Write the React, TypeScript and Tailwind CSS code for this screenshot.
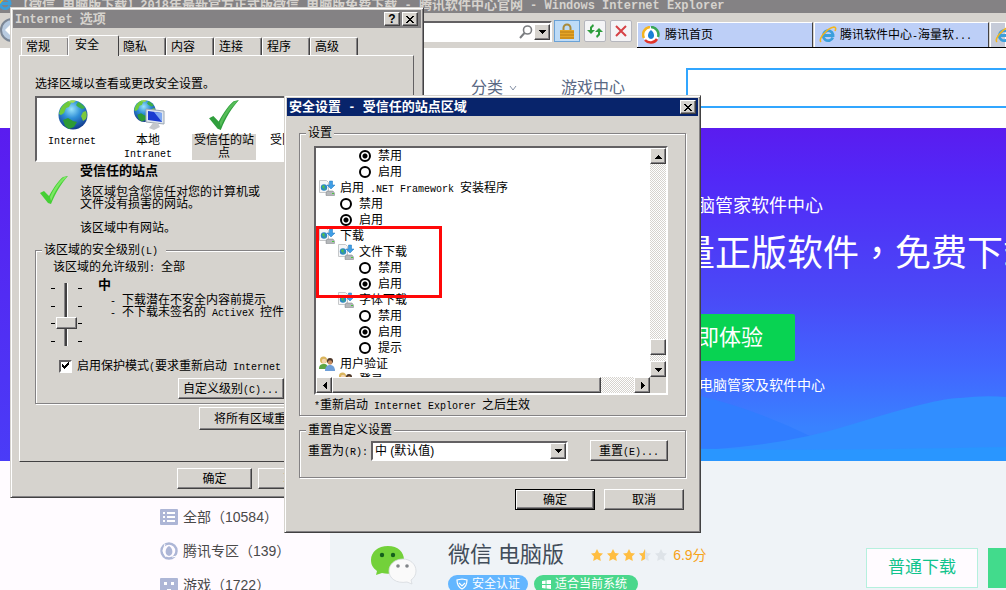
import React, { useState } from 'react';
import clsx from 'clsx';

const RAISED = 'border border-t-white border-l-white border-r-[#424142] border-b-[#424142] bg-[#d6d3ce] shadow-[inset_-1px_-1px_#848284]';
const SUNKEN = 'border-2 border-t-[#636163] border-l-[#636163] border-r-white border-b-white bg-white';
const WINDOW = 'border border-t-[#d6d3ce] border-l-[#d6d3ce] border-r-[#424142] border-b-[#424142] bg-[#d6d3ce] p-[2px] shadow-[inset_1px_1px_#fff,inset_-1px_-1px_#848284]';
const GROUP = 'min-w-0 border border-[#848284] shadow-[1px_1px_#fff,inset_1px_1px_#fff]';
const DITHER = 'bg-[repeating-conic-gradient(#fff_0_25%,#d6d3ce_0_50%)] bg-[length:2px_2px]';

// Latin runs are set in a half-width face so they line up with the CJK grid
function Mix({ text, bold = false }: { text: string; bold?: boolean }) {
	return (
		<span className={clsx('whitespace-pre', bold && 'font-bold')}>
			{text.split(/([\x20-\x7e]+)/).map((part, i) =>
				i % 2 === 1
					? <span key={i} className={clsx("font-['Liberation_Mono',monospace] leading-none", bold ? 'text-[12px]' : 'text-[10px]')}>{part}</span>
					: part
			)}
		</span>
	);
}

function Button({ label, className, isDefault = false }: { label: string; className?: string; isDefault?: boolean }) {
	return (
		<button
			className={clsx(
				'shrink-0 flex items-center justify-center text-[12px] leading-4',
				isDefault
					? 'border border-black bg-[#d6d3ce] shadow-[inset_1px_1px_#fff,inset_-1px_-1px_#424142,inset_-2px_-2px_#848284]'
					: RAISED,
				className
			)}
		>
			<Mix text={label} />
		</button>
	);
}

function CaptionButton({ label, children }: { label: string; children: React.ReactNode }) {
	return (
		<button aria-label={label} className={clsx('w-4 h-[14px] flex items-center justify-center', RAISED)}>
			{children}
		</button>
	);
}

function CloseGlyph() {
	return (
		<svg width="8" height="7" viewBox="0 0 8 7" shapeRendering="crispEdges">
			<path d="M0 0h2v1H0zM6 0h2v1H6zM1 1h2v1H1zM5 1h2v1H5zM2 2h4v1H2zM3 3h2v1H3zM2 4h4v1H2zM1 5h2v1H1zM5 5h2v1H5zM0 6h2v1H0zM6 6h2v1H6z" />
		</svg>
	);
}

function ArrowButton({ dir }: { dir: 'up' | 'down' | 'left' | 'right' }) {
	const paths = { up: 'M3 0h1v1h1v1h1v1h1v1H0V3h1V2h1V1h1z', down: 'M0 0h7v1H6v1H5v1H4v1H3V3H2V2H1V1H0z', left: 'M3 0h1v7H3V6H2V5H1V4H0V3h1V2h1V1h1z', right: 'M0 0h1v1h1v1h1v1h1v1H3v1H2v1H1v1H0z' };
	return (
		<button aria-label={`Scroll ${dir}`} className={clsx('w-4 h-4 shrink-0 flex items-center justify-center', RAISED)}>
			<svg width="7" height="7" viewBox={dir === 'up' || dir === 'down' ? '0 -2 7 7' : '-2 0 7 7'} shapeRendering="crispEdges">
				<path d={paths[dir]} />
			</svg>
		</button>
	);
}

function Globe({ className }: { className?: string }) {
	return (
		<svg viewBox="0 0 32 32" className={className}>
			<defs>
				<radialGradient id="sea" cx="0.45" cy="0.3" r="0.7">
					<stop offset="0" stopColor="#9be4fb" />
					<stop offset="0.45" stopColor="#2f8fd8" />
					<stop offset="1" stopColor="#123a8c" />
				</radialGradient>
			</defs>
			<circle cx="17" cy="16" r="14.500" fill="url(#sea)" />
			<path d="M4 11c2-5 6-8 9-9l2 2-2 4-3 1-2 5-3 2-2-1z" fill="#6fca3c" />
			<path d="M12 3c2-2 6-2 8-1l-3 2z" fill="#a5dc55" />
			<path d="M22 3c3 1 6 4 7 6l-3 1-4-2-2-2z" fill="#3fae46" />
			<path d="M27 13l3-1c1 3 1 6 0 8l-3 2-2-5z" fill="#7cc93c" />
			<path d="M7 21l5-2 5 3 4 1-3 5-5 2-4-3z" fill="#2d9a35" />
		</svg>
	);
}

function CheckMark({ light = false }: { light?: boolean }) {
	return (
		<svg viewBox="0 0 30 28" className={light ? 'w-[30px] h-7' : 'w-8 h-8'}>
			<path d="M1 17l4-2 5 5C15 11 20 4 24 1l5-1C22 8 17 16 12 28l-3-1z" fill={light ? '#45cf35' : '#2f9e3d'} />
			<path d="M11 21C15 12 20 5 25 1l3 0C20 8 15 17 12 25z" fill={light ? '#7ce863' : '#56bd58'} />
		</svg>
	);
}

function IntranetIcon() {
	return (
		<div className="relative w-8 h-8">
			<Globe className="w-6 h-6" />
			<svg viewBox="0 0 20 22" className="absolute left-[13px] top-[9px] w-5 h-[22px]">
				<path d="M1 1l18 2v13L1 14z" fill="#dfe6ee" stroke="#9aa6b4" />
				<path d="M3 3l14 2v9L3 12z" fill="#1a3bd0" />
				<path d="M9 4l8 1v9z" fill="#7fa8f2" />
				<path d="M8 15h5l2 4-6 3-5-2z" fill="#c4c7cc" />
			</svg>
		</div>
	);
}

function DownloadIcon() {
	return (
		<svg viewBox="0 0 16 16" className="w-4 h-4">
			<path d="M.5.5h7l2 2v10h-9z" fill="#f5f6f7" stroke="#c6c8ca" />
			<circle cx="5" cy="7.500" r="3.200" fill="#2a86c8" />
			<path d="M3 6l2-1 1 2-2 2zM5 9l2-1-1 2z" fill="#4fc04a" />
			<path d="M10.500 1h3v4H16l-4 4-4-4h2.500z" fill="#3f9ee6" stroke="#1d74bd" strokeWidth=".5" />
			<path d="M7 13l1-2h6l1.500 2v2.500H7z" fill="#b4b7ba" stroke="#7b7e82" strokeWidth=".5" />
			<path d="M13 13h2v1h-2z" fill="#49c93e" />
		</svg>
	);
}

function UsersIcon() {
	return (
		<svg viewBox="0 0 16 16" className="w-4 h-4">
			<circle cx="4.500" cy="4" r="3.500" fill="#d9b45c" />
			<circle cx="5" cy="5" r="2.200" fill="#f4d3ae" />
			<path d="M0 13c0-4 2-5 5-5s4 2 4 5z" fill="#5da544" />
			<circle cx="11" cy="5" r="3" fill="#4b3527" />
			<circle cx="11" cy="6.500" r="2.200" fill="#c98f62" />
			<path d="M6 15c0-4 2-6 5-6s5 2 5 6z" fill="#6e9fd8" />
		</svg>
	);
}

function IeIcon() {
	return (
		<svg viewBox="0 0 18 18" className="w-[18px] h-[18px] shrink-0">
			<path d="M13.800 11.500A5 5 0 1 1 14 8.500v1H5" fill="none" stroke="#3b9fdb" strokeWidth="2.800" />
			<path d="M2 16C-1 13 8 2 15 1c2 0 2 2 1 4" fill="none" stroke="#f2b51d" strokeWidth="1.600" />
		</svg>
	);
}

function TencentIcon() {
	return (
		<svg viewBox="0 0 18 18" className="w-[18px] h-[18px] shrink-0">
			<circle cx="9" cy="9" r="8" fill="#fff" />
			<path d="M2 12A7.500 7.500 0 0 1 8 1" fill="none" stroke="#f4b41f" strokeWidth="2.500" />
			<path d="M9 1a7.500 7.500 0 0 1 7 10" fill="none" stroke="#3aa757" strokeWidth="2.500" />
			<path d="M15 13A7.500 7.500 0 0 1 3 14" fill="none" stroke="#e0352b" strokeWidth="2.500" />
			<path d="M9 4c3 2 5 8 0 9-5-1-3-7 0-9z" fill="#1b7fd6" />
		</svg>
	);
}

const TABS = ['常规', '安全', '隐私', '内容', '连接', '程序', '高级'];

const ZONES = [
	{ name: 'Internet', icon: <Globe className="w-8 h-8" /> },
	{ name: '本地\nIntranet', icon: <IntranetIcon /> },
	{ name: '受信任的站\n点', icon: <CheckMark /> },
	{ name: '受限制的站\n点', icon: <svg viewBox="0 0 32 32" className="w-8 h-8"><circle cx="16" cy="16" r="12" fill="none" stroke="#c92b2b" strokeWidth="5" /><path d="M8 8l16 16" stroke="#c92b2b" strokeWidth="5" /></svg> },
];

function Ticks() {
	return (
		<div className="flex flex-col justify-between w-1 h-[54px] mt-[5px]">
			{[0, 1, 2, 3].map(i => <div key={i} className="h-px bg-black" />)}
		</div>
	);
}

function InternetOptions() {
	const [tab, setTab] = useState('安全');
	const [zone, setZone] = useState(2);

	return (
		<section className={clsx('absolute left-[10px] top-[7px] w-[414px] whitespace-nowrap', WINDOW)}>
			<header className="h-[18px] flex items-center gap-[2px] bg-[#848284] pl-[2px] pr-[3px] text-[13px] text-[#d6d3ce]">
				<h1 className="flex-1 leading-4"><Mix text="Internet 选项" bold /></h1>
				<CaptionButton label="Help"><b className="text-[12px] leading-3 text-black">?</b></CaptionButton>
				<CaptionButton label="Close"><CloseGlyph /></CaptionButton>
			</header>
			<div className="pt-[7px] pl-1.5 pr-[7px] pb-1.5">
				<div role="tablist" className="flex items-end h-5 pl-[2px]">
					{TABS.map(t => (
						<button
							key={t}
							role="tab"
							aria-selected={t === tab}
							onClick={() => setTab(t)}
							className={clsx(
								'border border-b-0 border-t-white border-l-white border-r-[#424142] bg-[#d6d3ce] rounded-t-[2px] text-left leading-4',
								t === tab ? 'relative z-10 w-[51px] h-[21px] -mx-px -mb-px px-1.5 pb-[2px]' : 'w-12 h-[18px] px-1 shadow-[inset_-1px_0_#848284]'
							)}
						>
							{t}
						</button>
					))}
				</div>
				<div className="border border-t-white border-l-white border-r-[#636163] border-b-[#424142] px-[15px] pt-5 pb-[31px]">
					<p className="leading-4">选择区域以查看或更改安全设置。</p>
					<div className={clsx('mt-1 flex gap-3 pl-[3px] pt-px overflow-hidden', SUNKEN)}>
						{ZONES.map((z, i) => (
							<button key={z.name} onClick={() => setZone(i)} className="w-16 shrink-0 flex flex-col items-center gap-[3px]">
								{z.icon}
								<span className={clsx('w-16 h-[26px] leading-[13px] text-center', i === zone && 'bg-[#d6d3ce]')}>
									<Mix text={z.name} />
								</span>
							</button>
						))}
					</div>
					<div className="flex gap-[11px] pl-1 pt-px">
						<div className="pt-[13px]"><CheckMark light /></div>
						<div>
							<h2 className="text-[13px] font-bold leading-4">受信任的站点</h2>
							<p className="mt-[7px] leading-3">该区域包含您信任对您的计算机或<br />文件没有损害的网站。</p>
							<p className="mt-3 leading-3">该区域中有网站。</p>
						</div>
					</div>
					<fieldset className={clsx('mt-2 pb-1', GROUP)}>
						<legend className="ml-1.5 pl-[2px] pr-2 bg-[#d6d3ce] leading-4"><Mix text="该区域的安全级别(L)" /></legend>
						<p className="mt-px pl-[17px] leading-4"><Mix text="该区域的允许级别: 全部" /></p>
						<div className="flex pl-[15px]">
							<div className="flex gap-px mt-2 h-[63px]">
								<Ticks />
								<input
									type="range"
									aria-label="安全级别"
									min={0}
									max={3}
									defaultValue={2}
									className="appearance-none [writing-mode:vertical-lr] w-[21px] h-[63px] bg-[linear-gradient(90deg,transparent_8px,#848284_8px_9px,#424142_9px_11px,#fff_11px_12px,transparent_12px)] [&::-webkit-slider-thumb]:appearance-none [&::-webkit-slider-thumb]:w-[21px] [&::-webkit-slider-thumb]:h-3 [&::-webkit-slider-thumb]:bg-[#d6d3ce] [&::-webkit-slider-thumb]:border [&::-webkit-slider-thumb]:border-t-white [&::-webkit-slider-thumb]:border-l-white [&::-webkit-slider-thumb]:border-r-[#424142] [&::-webkit-slider-thumb]:border-b-[#424142] [&::-webkit-slider-thumb]:shadow-[inset_-1px_-1px_#848284]"
								/>
								<Ticks />
							</div>
							<div className="ml-4 pt-[2px]">
								<h3 className="text-[13px] font-bold leading-4">中</h3>
								<ul className="mt-px pl-3 leading-3">
									<li className="h-3"><Mix text="- 下载潜在不安全内容前提示" /></li>
									<li className="h-3"><Mix text="- 不下载未签名的 ActiveX 控件" /></li>
								</ul>
							</div>
						</div>
						<label className="relative mt-3 pl-[23px] flex items-center gap-[5px] leading-4">
							<input type="checkbox" defaultChecked className={clsx('peer appearance-none w-[13px] h-[13px] shrink-0', SUNKEN)} />
							<svg viewBox="0 0 7 7" className="absolute left-[26px] top-[4px] w-[7px] h-[7px] invisible peer-checked:visible" shapeRendering="crispEdges">
								<path d="M0 2h1v1h1v1h1V3h1V2h1V1h1V0h1v3H6v1H5v1H4v1H3v1H2V6H1V5H0z" />
							</svg>
							<Mix text="启用保护模式(要求重新启动 Internet Explorer)(P)" />
						</label>
						<Button label="自定义级别(C)..." className="mt-1 ml-[142px] w-[106px] h-[21px]" />
					</fieldset>
					<Button label="将所有区域重置为默认级别(R)" className="mt-[3px] ml-[164px] w-48 h-[23px]" />
				</div>
				<div className="mt-1.5 flex justify-end gap-1.5">
					<Button label="确定" className="w-[75px] h-[21px]" />
					<Button label="取消" className="w-[75px] h-[21px]" />
					<Button label="应用(A)" className="w-[75px] h-[21px]" />
				</div>
			</div>
		</section>
	);
}

type Row = { level: 0 | 1 | 2; text: string; kind: 'download' | 'users' | 'radio'; group?: string; on?: boolean };

const ROWS: Row[] = [
	{ level: 2, text: '禁用', kind: 'radio', group: 'first', on: true },
	{ level: 2, text: '启用', kind: 'radio', group: 'first' },
	{ level: 0, text: '启用 .NET Framework 安装程序', kind: 'download' },
	{ level: 1, text: '禁用', kind: 'radio', group: 'net' },
	{ level: 1, text: '启用', kind: 'radio', group: 'net', on: true },
	{ level: 0, text: '下载', kind: 'download' },
	{ level: 1, text: '文件下载', kind: 'download' },
	{ level: 2, text: '禁用', kind: 'radio', group: 'file' },
	{ level: 2, text: '启用', kind: 'radio', group: 'file', on: true },
	{ level: 1, text: '字体下载', kind: 'download' },
	{ level: 2, text: '禁用', kind: 'radio', group: 'font' },
	{ level: 2, text: '启用', kind: 'radio', group: 'font', on: true },
	{ level: 2, text: '提示', kind: 'radio', group: 'font' },
	{ level: 0, text: '用户验证', kind: 'users' },
	{ level: 1, text: '登录', kind: 'users' },
];

const INDENT = ['pl-[3px]', 'pl-[22px]', 'pl-[41px]'];

function SettingRow({ row }: { row: Row }) {
	const Tag = row.kind === 'radio' ? 'label' : 'div';
	return (
		<Tag className={clsx('h-4 flex items-center gap-[5px] leading-4', INDENT[row.level])}>
			<span className="w-4 h-4 flex items-center justify-center">
				{row.kind === 'download' && <DownloadIcon />}
				{row.kind === 'users' && <UsersIcon />}
				{row.kind === 'radio' && (
					<input
						type="radio"
						name={row.group}
						defaultChecked={row.on}
						className="appearance-none w-3 h-3 rounded-full border-2 border-black bg-white checked:bg-[radial-gradient(circle,#000_0_2px,#fff_3px)]"
					/>
				)}
			</span>
			<Mix text={row.text} />
		</Tag>
	);
}

function SecuritySettings() {
	return (
		<section className={clsx('absolute left-[284px] top-[95px] w-[417px] whitespace-nowrap', WINDOW)}>
			<header className="h-[18px] flex items-center bg-[#08246b] pl-[2px] pr-[2px] text-[13px] text-white">
				<h1 className="flex-1 leading-4"><Mix text="安全设置 - 受信任的站点区域" bold /></h1>
				<CaptionButton label="Close"><CloseGlyph /></CaptionButton>
			</header>
			<div className="px-3 pt-[9px] pb-5">
				<fieldset className={clsx('pl-[14px] pr-[17px] pb-[2px]', GROUP)}>
					<legend className="-ml-2 px-[2px] bg-[#d6d3ce] leading-4">设置</legend>
					<div className={clsx('mt-[5px]', SUNKEN)}>
						<div className="flex">
							<div className="relative flex-1 h-[229px] overflow-hidden">
								{ROWS.map((row, i) => <SettingRow key={i} row={row} />)}
								<div className="absolute left-0 top-[78px] w-[126px] h-[72px] border-3 border-[#ff0808]" />
							</div>
							<div className={clsx('w-4 flex flex-col', DITHER)}>
								<ArrowButton dir="up" />
								<div className={clsx('mt-auto mb-1.5 h-4', RAISED)} />
								<ArrowButton dir="down" />
							</div>
						</div>
						<div className="flex bg-[#d6d3ce] pr-4">
							<ArrowButton dir="left" />
							<div className={clsx('flex-1 flex', DITHER)}>
								<div className={clsx('w-[89%]', RAISED)} />
							</div>
							<ArrowButton dir="right" />
						</div>
					</div>
					<p className="mt-[2px] h-4 leading-4"><Mix text="*重新启动 Internet Explorer 之后生效" /></p>
				</fieldset>
				<fieldset className={clsx('mt-1.5 pl-2 pr-[17px] pb-4', GROUP)}>
					<legend className="-ml-[2px] px-[2px] bg-[#d6d3ce] leading-4">重置自定义设置</legend>
					<div className="mt-[2px] flex items-center">
						<label htmlFor="reset-to" className="leading-4"><Mix text="重置为(R):" /></label>
						<div className={clsx('ml-[3px] w-[197px] h-5 flex', SUNKEN)}>
							<select id="reset-to" className="appearance-none flex-1 pl-[2px] text-[12px] leading-4 bg-white outline-none">
								<option>中 (默认值)</option>
								<option>中低</option>
								<option>高</option>
							</select>
							<ArrowButton dir="down" />
						</div>
						<Button label="重置(E)..." className="ml-auto w-[78px] h-[21px]" />
					</div>
				</fieldset>
				<div className="mt-[11px] pr-[2px] flex justify-end gap-[9px]">
					<Button label="确定" className="w-20 h-[21px]" isDefault />
					<Button label="取消" className="w-20 h-[21px]" />
				</div>
			</div>
		</section>
	);
}

function BrowserChrome() {
	return (
		<header className="whitespace-nowrap">
			<div className="relative h-[13px] overflow-hidden bg-[#848284] pl-4 text-[13px] leading-[10px] text-[#d6d3ce]">
				<div className="absolute -left-1 -top-1.5"><IeIcon /></div>
				<Mix text="【微信 电脑版下载】2018年最新官方正式版微信 电脑版免费下载 - 腾讯软件中心官网 - Windows Internet Explorer" bold />
			</div>
			<div className="flex h-[35px] bg-[#d6d3ce] overflow-hidden">
				<svg viewBox="0 0 24 28" className="w-6 h-7 mt-[3px] shrink-0">
					<circle cx="12" cy="14" r="11" fill="#b9cbe0" stroke="#7c8796" strokeWidth="2" />
					<path d="M13 6l-8 8 8 8v-5h7v-6h-7z" fill="#fff" />
				</svg>
				<div className={clsx('mt-2 w-[528px] h-[21px] shrink-0 flex items-center justify-end gap-px', SUNKEN)}>
					<input aria-label="Address" className="flex-1 min-w-0 outline-none" />
					<svg viewBox="0 0 14 14" className="w-[14px] h-[14px]">
						<circle cx="8.500" cy="5" r="4" fill="none" stroke="#7b7d80" strokeWidth="1.600" />
						<path d="M5.500 8L1 13" stroke="#7b7d80" strokeWidth="2" />
					</svg>
					<ArrowButton dir="down" />
				</div>
				<button aria-label="Security report" className="mt-[7px] ml-[2px] w-[26px] h-[22px] shrink-0 flex items-center justify-center border border-[#6ba2d6] bg-[#bddbf7]">
					<svg viewBox="0 0 14 16" className="w-[14px] h-4">
						<path d="M3.500 8V5a3.500 3.500 0 0 1 7 0v3" fill="none" stroke="#a98a3a" strokeWidth="2" />
						<path d="M0 7h14v9H0z" fill="#e5a526" />
						<path d="M0 9h14M0 12h14M0 15h14" stroke="#b87a12" />
					</svg>
				</button>
				<button aria-label="Refresh" className="mt-[7px] ml-1 w-[22px] h-[22px] shrink-0 flex items-center justify-center rounded-[2px] border border-[#b5b6bd] bg-[#f4f4f6]">
					<svg viewBox="0 0 16 14" className="w-4 h-[14px]">
						<path d="M6 0L3 3v3H0l4 4 4-4H5V4l2-2z" fill="#2e9e3e" />
						<path d="M10 14l3-3V8h3l-4-4-4 4h3v2l-2 2z" fill="#2e9e3e" />
					</svg>
				</button>
				<button aria-label="Stop" className="mt-[7px] ml-1 w-[22px] h-[22px] shrink-0 flex items-center justify-center rounded-[2px] border border-[#b5b6bd] bg-[#f4f4f6]">
					<svg viewBox="0 0 12 12" className="w-3 h-3"><path d="M1 1l10 10M11 1L1 11" stroke="#d64247" strokeWidth="2" /></svg>
				</button>
				<nav className="mt-[9px] ml-[5px] flex flex-1 min-w-0 border-b border-black">
					<a href="#home" className="w-[176px] shrink-0 flex items-center gap-[5px] pl-1 border border-b-0 border-t-white border-l-white border-r-[#424142] bg-[#bdcff7]">
						<TencentIcon />腾讯首页
					</a>
					<a href="#soft" className="w-[175px] shrink-0 flex items-center gap-[3px] pl-1 ml-px border border-b-0 border-t-white border-l-white border-r-[#424142] bg-[#bdcff7]">
						<IeIcon /><Mix text="腾讯软件中心-海量软..." />
					</a>
					<a href="#current" aria-label="Current tab" className="w-4 shrink-0 flex items-center pl-1 ml-px border border-b-0 border-white bg-[#c6cbd8]">
						<IeIcon />
					</a>
				</nav>
			</div>
		</header>
	);
}

function Star({ fill }: { fill: 'full' | 'part' | 'none' }) {
	const d = 'M6 0l2 4 4 .5-3 3 .8 4.500L6 10l-3.800 2L3 7.500l-3-3L4 4z';
	return (
		<svg viewBox="0 0 12 12" className="w-3 h-3">
			<path d={d} fill={fill === 'full' ? '#ffbe42' : '#dee3e8'} />
			{fill === 'part' && <path d="M6 0v10l-3.800 2L3 7.500l-3-3L4 4z" fill="#ffbe42" />}
		</svg>
	);
}

const CATEGORIES = [
	{
		text: '全部（10584）',
		icon: <><rect y="1" width="18" height="16" rx="1" fill="#adb6d6" /><path d="M3 5h2M3 9h2M3 13h2M7 5h8M7 9h8M7 13h8" stroke="#fff" strokeWidth="2" /></>,
	},
	{
		text: '腾讯专区（139）',
		icon: <><circle cx="9" cy="9" r="7.500" fill="none" stroke="#adb6d6" strokeWidth="2.500" /><path d="M9 4c4 2 5 9 0 10-5-1-4-8 0-10z" fill="#adb6d6" /><path d="M5 2L3 9l3 6M12 15l5-1" stroke="#fff" fill="none" /></>,
	},
	{
		text: '游戏（1722）',
		icon: <><rect y="2" width="18" height="16" rx="1" fill="#adb6d6" /><path d="M4 6h3v3H4zM11 6h3v3h-3zM7 13h4v2H7z" fill="#fff" /></>,
	},
];

export default function App() {
	return (
		<div className="relative min-h-screen overflow-hidden bg-[#fffbff] text-[12px] text-black font-['Liberation_Sans','Noto_Sans_CJK_SC',sans-serif]">
			<div className="h-screen overflow-hidden flex flex-col">
				<BrowserChrome />
				<div className="h-20 shrink-0 flex bg-white pl-[471px] pt-5 text-[16px] text-[#5a6984] whitespace-nowrap">
					<a href="#category" className="mt-2 h-6 leading-6 flex items-center gap-1.5">
						分类
						<svg viewBox="0 0 8 6" className="w-2 h-1.5"><path d="M1 1l3 4 3-4" fill="none" stroke="#8490a5" /></svg>
					</a>
					<a href="#games" className="mt-2 h-6 leading-6 ml-11">游戏中心</a>
					<input aria-label="Search" className="ml-[61px] -mr-1 h-10 flex-1 min-w-0 border-2 border-[#31a6ff] bg-white outline-none" />
				</div>
				<section className="relative h-[333px] shrink-0 overflow-hidden pl-[643px] text-white whitespace-nowrap bg-[linear-gradient(180deg,#5a1cef_0%,#5228f7_15%,#4a49f7_50%,#4265ff_72%,#3982ff_90%)]">
					<svg viewBox="0 0 1006 90" preserveAspectRatio="none" className="absolute left-0 bottom-0 w-full h-[90px]">
						<path d="M600 90V22Q660 10 701 25Q760 40 812 66L860 90z" fill="#317dff" />
						<path d="M640 80Q760 82 850 54T960 27Q985 24 1006 26V90H640z" fill="#318eff" />
						<path d="M560 90Q620 76 720 78T1006 76V90z" fill="#2996ff" />
					</svg>
					<div className="absolute left-0 top-0 bottom-0 w-[10px] bg-[linear-gradient(180deg,#5a1cef,#4a3cf7)]" />
					<div className="relative pt-[66px]">
						<p className="text-[18px] leading-6">腾讯电脑管家软件中心</p>
						<h1 className="mt-1.5 text-[36px] leading-[60px]">
							海量正版软件<span className="font-['Noto_Sans_CJK_TC',sans-serif] leading-none">，</span>免费下载
						</h1>
						<button className="mt-[30px] w-[152px] h-[47px] rounded-[2px] bg-[#08d352] text-[22px]">立即体验</button>
						<p className="mt-[14px] text-[14px] leading-5">下载腾讯电脑管家及软件中心</p>
					</div>
				</section>
				<div className="flex flex-1 min-h-0 whitespace-nowrap">
					<ul className="w-[330px] shrink-0 pl-40 pt-[46px] text-[14px] text-[#4a494a]">
						{CATEGORIES.map(c => (
							<li key={c.text} className="h-[34px] leading-5">
								<a href="#list" className="flex items-center gap-[5px]">
									<svg viewBox="0 0 18 18" className="w-[18px] h-[18px]">{c.icon}</svg>
									{c.text}
								</a>
							</li>
						))}
					</ul>
					<article className="flex flex-1 min-w-0 items-start bg-[#eff3f7] pl-10 pt-20">
						<svg viewBox="0 0 48 40" className="w-12 h-10 mt-1 shrink-0">
							<path d="M18 1C8 1 1 7 1 15c0 5 2 8 6 11l-1 4 6-2c13 3 22-4 22-13C34 7 28 1 18 1z" fill="#73d13a" />
							<circle cx="12" cy="10" r="2.200" fill="#14601c" /><circle cx="23" cy="10" r="2.200" fill="#14601c" />
							<path d="M33 14c-8 0-14 5-14 12s7 13 18 11l5 2-1-4c3-2 5-5 5-9 0-7-6-12-13-12z" fill="#fafafa" stroke="#d5d9de" strokeWidth=".8" />
							<circle cx="28" cy="21" r="1.800" fill="#808488" /><circle cx="37" cy="21" r="1.800" fill="#808488" />
						</svg>
						<div className="ml-[30px]">
							<div className="flex items-center h-7">
								<h2 className="text-[22px] leading-7 text-[#424d5a]">微信 电脑版</h2>
								<div className="ml-[27px] flex gap-1">
									<Star fill="full" /><Star fill="full" /><Star fill="full" /><Star fill="part" /><Star fill="none" />
								</div>
								<span className="ml-1.5 text-[14px] leading-5 text-[#f7a218]">6.9分</span>
							</div>
							<div className="mt-1.5 flex gap-1.5 text-white leading-[18px]">
								<span className="h-[18px] rounded-full bg-[#63b6ff] flex items-center gap-1 pl-2 pr-2">
									<svg viewBox="0 0 12 12" className="w-3 h-3"><path d="M6 1l5 1c0 4-1 7-5 9-4-2-5-5-5-9zM3 5l3 3 3-3" fill="none" stroke="#fff" strokeWidth="1.200" /></svg>
									安全认证
								</span>
								<span className="h-[18px] rounded-full bg-[#4ad78c] flex items-center gap-1 pl-2 pr-[11px]">
									<svg viewBox="0 0 10 10" className="w-[9px] h-[9px]"><path d="M0 1l4-.5v4H0zM5 .3L10 0v4.500H5zM0 5.500h4v4L0 9zM5 5.500h5V10l-5-.5z" fill="#fff" /></svg>
									适合当前系统
								</span>
							</div>
						</div>
						<div className="ml-auto mt-[7px] flex gap-[10px]">
							<button className="w-28 h-10 border border-[#b5f0de] bg-[#fffbff] text-[17px] text-[#10c38c]">普通下载</button>
							<button aria-label="高速下载" className="w-[18px] h-10 bg-[#42db8c]" />
						</div>
					</article>
				</div>
			</div>
			<InternetOptions />
			<SecuritySettings />
		</div>
	);
}
